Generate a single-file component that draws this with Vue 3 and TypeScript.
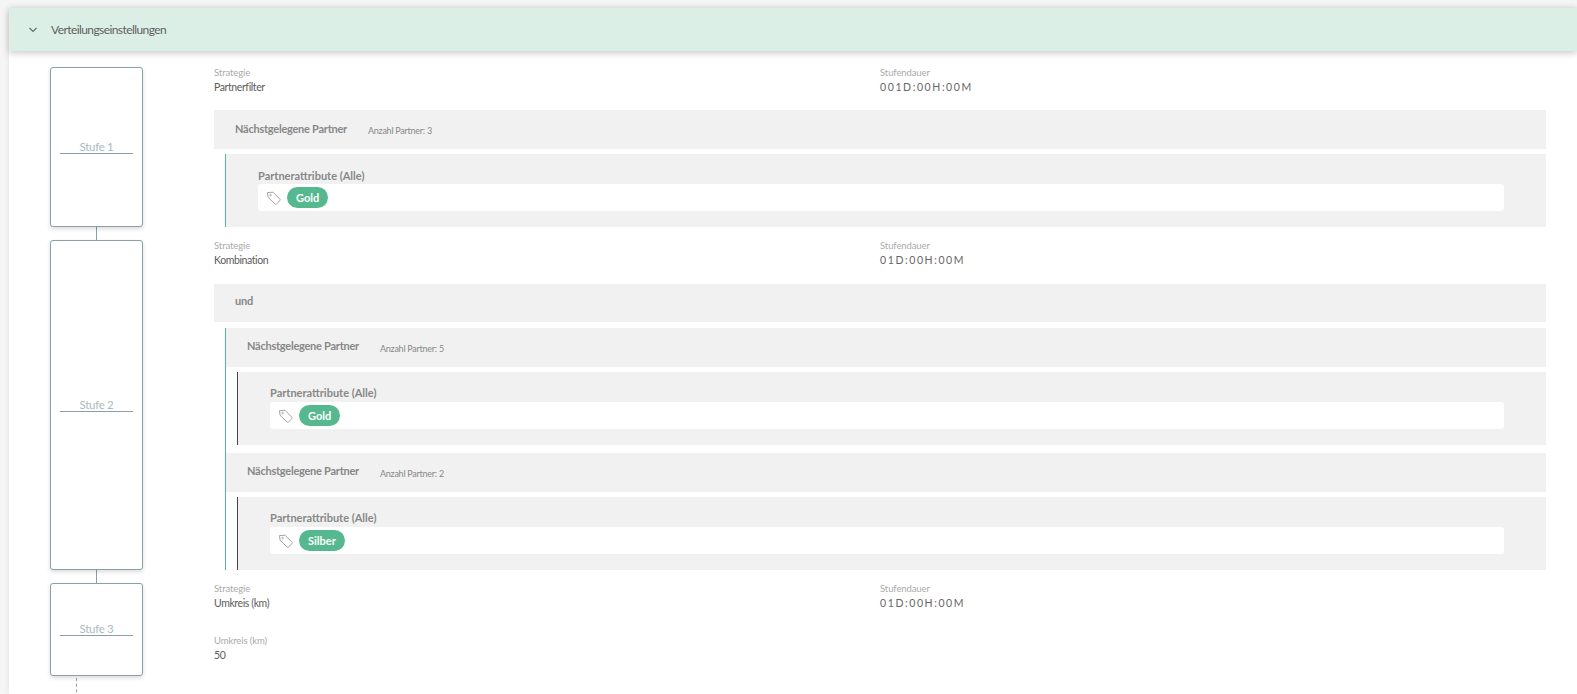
<script setup lang="ts">
interface Group {
  name: string;
  count: number;
  tag: string;
}
interface Stage {
  title: string;
  strategy: string;
  duration: string;
  operator?: string;
  groups: Group[];
  radius?: string;
}

const stages: Stage[] = [
  {
    title: "Stufe 1",
    strategy: "Partnerfilter",
    duration: "001D:00H:00M",
    groups: [{ name: "Nächstgelegene Partner", count: 3, tag: "Gold" }],
  },
  {
    title: "Stufe 2",
    strategy: "Kombination",
    duration: "01D:00H:00M",
    operator: "und",
    groups: [
      { name: "Nächstgelegene Partner", count: 5, tag: "Gold" },
      { name: "Nächstgelegene Partner", count: 2, tag: "Silber" },
    ],
  },
  {
    title: "Stufe 3",
    strategy: "Umkreis (km)",
    duration: "01D:00H:00M",
    groups: [],
    radius: "50",
  },
];
</script>

<template>
  <div class="page">
    <section class="card">
      <header class="card-head">
        <svg class="chevron" width="10" height="6" viewBox="0 0 10 6">
          <path d="M1.5 1 5 4.5 8.5 1" fill="none" stroke="#5f6b68" stroke-width="1.1" />
        </svg>
        <span>Verteilungseinstellungen</span>
      </header>

      <div class="stages">
        <template v-for="(stage, i) in stages" :key="stage.title">
          <div class="connector" v-if="i > 0"></div>
          <div class="stage">
            <div class="stage-box">
              <div class="stage-title">{{ stage.title }}</div>
            </div>
            <div class="stage-body">
              <div class="meta">
                <div>
                  <div class="label">Strategie</div>
                  <div class="value">{{ stage.strategy }}</div>
                </div>
                <div>
                  <div class="label">Stufendauer</div>
                  <div class="value duration">{{ stage.duration }}</div>
                </div>
              </div>

              <div class="radius" v-if="stage.radius">
                <div class="label">Umkreis (km)</div>
                <div class="value">{{ stage.radius }}</div>
              </div>

              <div class="bar bar-top" v-if="stage.operator">
                <span class="bar-name">{{ stage.operator }}</span>
              </div>

              <div :class="stage.operator ? 'nested' : 'flat'" v-if="stage.groups.length">
                <div class="group" v-for="(group, g) in stage.groups" :key="g">
                  <div class="bar">
                    <span class="bar-name">{{ group.name }}</span>
                    <span class="bar-count">Anzahl Partner: {{ group.count }}</span>
                  </div>
                  <div class="attrs">
                    <div class="attrs-title">Partnerattribute (Alle)</div>
                    <div class="attrs-field">
                      <svg class="tag-icon" width="16" height="16" viewBox="0 0 16 16">
                        <path
                          d="M1.5 2.6 7 2.2l7 7.1a.9.9 0 0 1 0 1.2l-3.6 3.6a.9.9 0 0 1-1.2 0L2.1 7.3z"
                          fill="none"
                          stroke="#a3a3a3"
                          stroke-width="1"
                        />
                        <circle cx="4.6" cy="5" r="0.8" fill="none" stroke="#a3a3a3" stroke-width="0.8" />
                      </svg>
                      <span class="pill">{{ group.tag }}</span>
                    </div>
                  </div>
                </div>
              </div>
            </div>
          </div>
        </template>
        <div class="connector dashed"></div>
      </div>
    </section>
  </div>
</template>

<style>
html,
body {
  margin: 0;
  height: 100%;
  overflow: hidden;
  background: #f5f5f5;
}
</style>

<style scoped>
.page {
  height: 694px;
  padding: 8px 0 0 9px;
  box-sizing: border-box;
  overflow: hidden;
  font-family: "Lato", "Roboto", sans-serif;
  color: #555;
}
.card {
  background: #fff;
  height: 686px;
  box-shadow: 0 0 6px rgba(0, 0, 0, 0.08);
}
.card-head {
  height: 43px;
  display: flex;
  align-items: center;
  gap: 13px;
  padding-left: 19px;
  background: #dcefe6;
  font-size: 12px;
  letter-spacing: -0.58px;
  color: #5f5f5f;
  box-shadow: 0 2px 7px rgba(0, 0, 0, 0.22);
  position: relative;
}
.stages {
  padding: 16px 31px 0 41px;
}
.stage {
  display: flex;
  gap: 71px;
}
.stage-box {
  width: 93px;
  flex: none;
  box-sizing: border-box;
  background: #fff;
  border: 1px solid #88a0a6;
  border-radius: 3px;
  box-shadow: 0 2px 4px rgba(0, 0, 0, 0.14);
  display: flex;
  align-items: center;
  padding: 0 9px;
}
.stage-title {
  flex: 1;
  height: 12px;
  line-height: 12px;
  border-bottom: 1px solid #88a0a6;
  text-align: center;
  font-size: 11.5px;
  letter-spacing: -0.3px;
  color: #a9b9bd;
}
.connector {
  width: 1px;
  height: 13px;
  margin-left: 46px;
  background: #88a0a6;
}
.connector.dashed {
  height: 20px;
  margin-top: 2px;
  margin-left: 26px;
  background: none;
  border-left: 1px dashed #88a0a6;
}
.stage-body {
  flex: 1;
  min-width: 0;
}
.meta {
  display: grid;
  grid-template-columns: 1fr 1fr;
  height: 44px;
}
.stage:first-of-type .meta {
  height: 43px;
}
.label {
  font-size: 9.5px;
  line-height: 12px;
  letter-spacing: -0.1px;
  color: #aaa;
}
.value {
  font-size: 10.5px;
  line-height: 16px;
  letter-spacing: -0.4px;
  color: #5c5c5c;
}
.duration {
  letter-spacing: 1.6px;
  color: #666;
}
.radius {
  padding: 8px 0 13px;
}
.bar {
  height: 39px;
  background: #f1f1f1;
  display: flex;
  align-items: center;
  padding-left: 21px;
  gap: 21px;
}
.bar-top {
  height: 38px;
  margin-bottom: 6px;
}
.bar-name {
  font-size: 11px;
  font-weight: 700;
  letter-spacing: -0.25px;
  color: #888;
  padding-bottom: 3px;
}
.bar-top .bar-name,
.nested .bar-name {
  padding-bottom: 5px;
}
.bar-count {
  font-size: 9px;
  letter-spacing: -0.25px;
  color: #888;
  padding-top: 1px;
}
.flat .attrs {
  margin-left: 11px;
  border-left: 1px solid #55b88e;
}
.nested {
  margin-left: 11px;
  border-left: 1px solid #55b88e;
  display: flex;
  flex-direction: column;
  gap: 8px;
}
.nested .attrs {
  margin-left: 11px;
  border-left: 1px solid #444;
  padding-top: 14px;
}
.nested .attrs-title {
  margin-bottom: 3px;
}
.attrs {
  margin-top: 5px;
  height: 73px;
  box-sizing: border-box;
  background: #f1f1f1;
  padding: 15px 42px 0 32px;
}
.attrs-title {
  font-size: 11px;
  line-height: 13px;
  margin-bottom: 2px;
  font-weight: 700;
  color: #888;
}
.attrs-field {
  height: 27px;
  background: #fff;
  border-radius: 3px;
  display: flex;
  align-items: center;
  gap: 5px;
  padding-left: 8px;
}
.tag-icon {
  flex: none;
}
.pill {
  height: 21px;
  line-height: 21px;
  padding: 0 9px;
  border-radius: 11px;
  background: #55b88e;
  color: #fff;
  font-size: 11px;
  font-weight: 700;
}
</style>
